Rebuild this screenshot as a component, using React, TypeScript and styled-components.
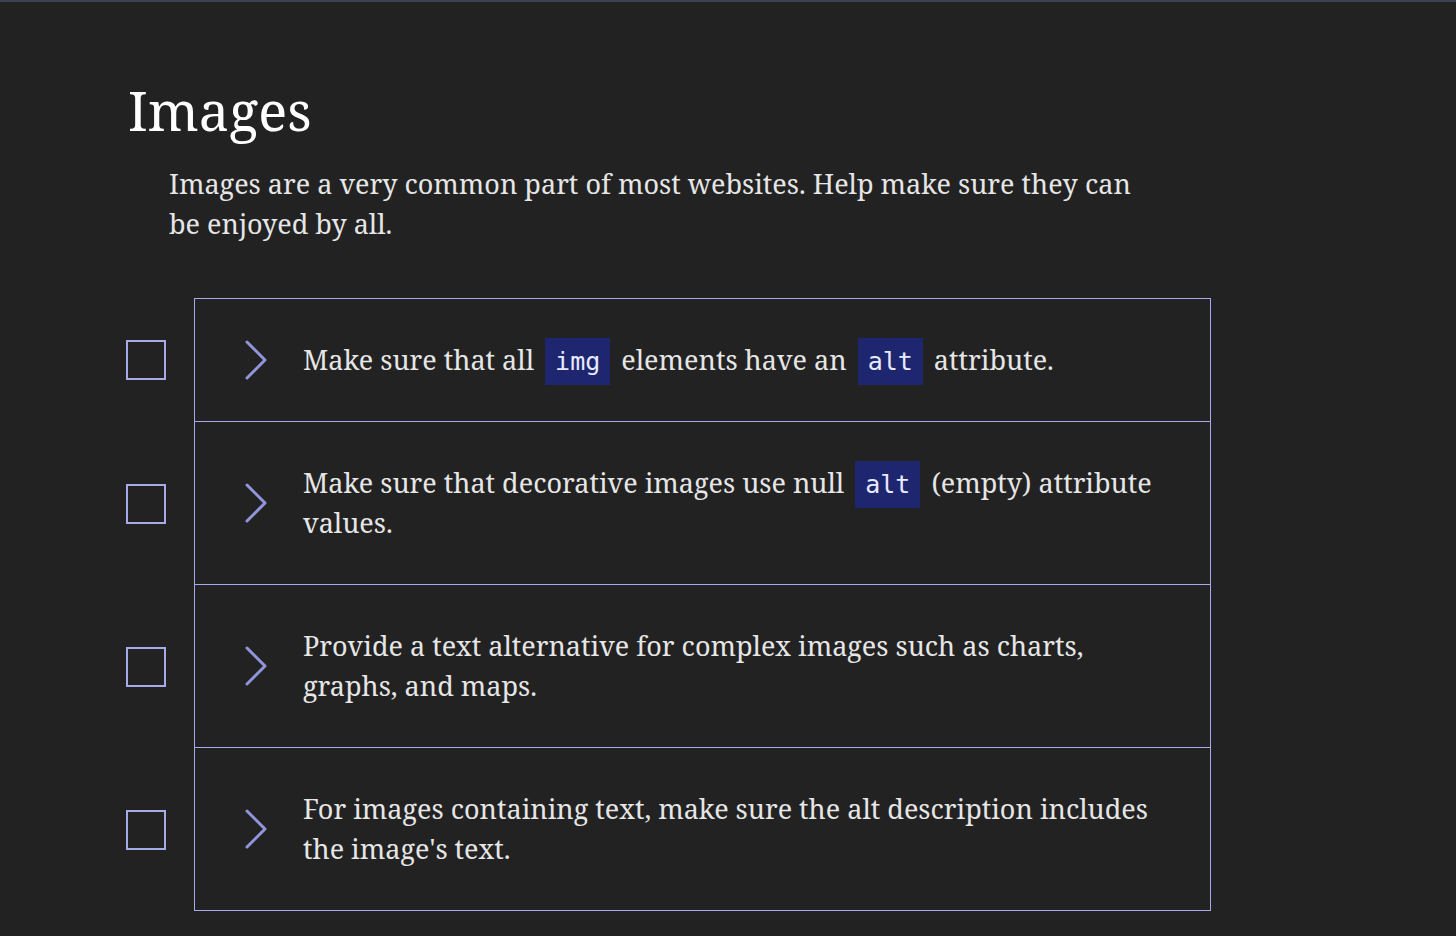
import React from 'react';
import styled, { createGlobalStyle } from 'styled-components';

interface Item {
  id: number;
  parts: (string | { code: string })[];
}

const items: Item[] = [
  { id: 1, parts: ['Make sure that all ', { code: 'img' }, ' elements have an ', { code: 'alt' }, ' attribute.'] },
  { id: 2, parts: ['Make sure that decorative images use null ', { code: 'alt' }, ' (empty) attribute values.'] },
  { id: 3, parts: ['Provide a text alternative for complex images such as charts, graphs, and maps.'] },
  { id: 4, parts: ["For images containing text, make sure the alt description includes the image's text."] },
];

const GlobalStyle = createGlobalStyle`
  html, body {
    margin: 0;
    padding: 0;
    background: #222222;
  }
  body {
    font-family: "Noto Serif", "DejaVu Serif", serif;
    color: #e6e6e6;
  }
`;

const Page = styled.div`
  min-height: 936px;
  box-sizing: border-box;
  border-top: 2px solid #3d4150;
  padding: 72px 0 0 128px;
`;

const Title = styled.h1`
  margin: 0;
  font-size: 54px;
  font-weight: 400;
  line-height: 72px;
  color: #ffffff;
`;

const Intro = styled.p`
  margin: 18px 0 0 41px;
  max-width: 980px;
  font-size: 27px;
  line-height: 40px;
  color: #e6e6e6;
`;

const List = styled.ul`
  list-style: none;
  margin: 54px 0 0 -2px;
  padding: 0;
`;

const Row = styled.li`
  display: flex;
  align-items: center;
`;

const Check = styled.span`
  flex: none;
  width: 36px;
  height: 36px;
  border: 2px solid #a6abea;
  margin-right: 28px;
`;

const Panel = styled.div<{ $first: boolean }>`
  flex: none;
  width: 1017px;
  box-sizing: border-box;
  border: 1px solid #a6abea;
  border-top-width: ${(p) => (p.$first ? '1px' : '0')};
  display: flex;
  align-items: center;
  padding: 41px 40px 41px 49px;
`;

const Chevron = styled.svg`
  flex: none;
  width: 24px;
  height: 40px;
  margin-right: 35px;
`;

const Text = styled.div`
  font-size: 27px;
  line-height: 40px;
  color: #e6e6e6;
  max-width: 870px;
`;

const Code = styled.code`
  font-family: "DejaVu Sans Mono", "Liberation Mono", monospace;
  font-size: 25px;
  line-height: 1;
  background: #1e2670;
  color: #e8eaff;
  padding: 9px 10px 9px;
  margin: 0 4px;
`;

export default function App() {
  return (
    <>
      <GlobalStyle />
      <Page>
        <Title>Images</Title>
        <Intro>Images are a very common part of most websites. Help make sure they can be enjoyed by all.</Intro>
        <List>
          {items.map((item, i) => (
            <Row key={item.id}>
              <Check />
              <Panel $first={i === 0}>
                <Chevron viewBox="0 0 24 40" fill="none">
                  <path d="M3 2 L21 20 L3 38" stroke="#9196dc" strokeWidth="3" strokeLinecap="round" strokeLinejoin="round" />
                </Chevron>
                <Text>
                  {item.parts.map((p, j) =>
                    typeof p === 'string' ? <React.Fragment key={j}>{p}</React.Fragment> : <Code key={j}>{p.code}</Code>
                  )}
                </Text>
              </Panel>
            </Row>
          ))}
        </List>
      </Page>
    </>
  );
}
